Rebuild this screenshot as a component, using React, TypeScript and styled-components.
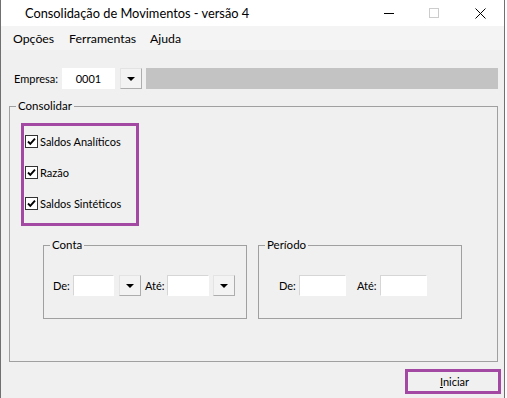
import React from "react";
import styled, { createGlobalStyle } from "styled-components";

const GlobalStyle = createGlobalStyle`
  html, body { margin: 0; padding: 0; background: #ffffff; }
  body { font-family: Lato, 'Noto Sans', 'Liberation Sans', sans-serif; font-size: 11px; color: #000; }
`;

const Window = styled.div`
  width: 505px; height: 398px;
  display: flex; flex-direction: column;
  border-left: 1px solid #707070;
  border-right: 1px solid #707070;
  box-sizing: border-box;
  background: #f0f0f0;
  overflow: hidden;
`;

const TitleBar = styled.div`
  height: 26px; flex: none;
  display: flex; align-items: center;
  background: #ffffff;
  padding-left: 24px;
`;

const Title = styled.div`
  flex: 1;
  font-size: 12.8px;
  line-height: 16px;
`;

const CaptionButton = styled.div<{ w?: number }>`
  width: ${p => p.w ?? 45}px; height: 26px;
  display: flex; align-items: center; justify-content: center;
`;

const MenuBar = styled.div`
  height: 24px; flex: none;
  display: flex; align-items: center;
  background: #f4f4f4;
  padding-left: 5px;
  padding-top: 1px;
  box-sizing: border-box;
  font-size: 12.3px;
`;

const MenuItem = styled.div<{ w: number }>`
  width: ${p => p.w}px;
  padding-left: 7px;
  line-height: 16px;
`;

const Body = styled.div`
  flex: 1;
  display: flex; flex-direction: column;
  padding: 18px 6px 0 8px;
`;

const Row = styled.div`
  display: flex; align-items: center;
`;

const EmpresaRow = styled(Row)`
  height: 21px;
  margin-left: 5px;
`;

const Label = styled.div<{ w?: number }>`
  ${p => p.w ? `width: ${p.w}px;` : ""}
  flex: none;
  line-height: 16px;
  white-space: nowrap;
`;

const TextBox = styled.div<{ w: number; center?: boolean }>`
  width: ${p => p.w}px; height: 21px;
  box-sizing: border-box;
  background: #ffffff;
  border: 1px solid ${p => p.center ? "#ffffff" : "#d6d6d6"};
  border-right-color: #ffffff; border-bottom-color: #ffffff;
  display: flex; align-items: center; justify-content: center;
  flex: none;
`;

const DropButton = styled.div<{ ml?: number }>`
  width: 22px; height: 21px;
  box-sizing: border-box;
  margin-left: ${p => p.ml ?? 5}px;
  background: #f3f3f3;
  border: 1px solid #adadad;
  border-top-color: #e3e3e3; border-left-color: #e3e3e3;
  display: flex; align-items: center; justify-content: center;
  flex: none;
`;

const Arrow = styled.div`
  width: 0; height: 0;
  border-left: 4px solid transparent;
  border-right: 4px solid transparent;
  border-top: 4px solid #000;
  margin-top: 1px;
`;

const GrayBar = styled.div`
  flex: 1; height: 21px;
  margin-left: 4px;
  background: #c3c3c3;
`;

const GroupBox = styled.div<{ w?: number; h: number }>`
  position: relative;
  ${p => p.w ? `width: ${p.w}px;` : ""}
  height: ${p => p.h}px;
  box-sizing: border-box;
  border: 1px solid #a0a0a0;
  flex: none;
`;

const GroupCaption = styled.span`
  position: absolute;
  top: -9px; left: 6px;
  padding: 0 2px;
  background: #f0f0f0;
  line-height: 16px;
  font-size: 11.5px;
`;

const Consolidar = styled(GroupBox)`
  margin-top: 17px;
  padding: 16px 0 0 11px;
`;

const Highlight = styled.div<{ w: number; h: number }>`
  width: ${p => p.w}px; height: ${p => p.h}px;
  box-sizing: border-box;
  border: 3px solid #a349a4;
`;

const CheckList = styled(Highlight)`
  display: flex; flex-direction: column;
  padding-left: 1px;
`;

const CheckRow = styled.div`
  height: 31px;
  display: flex; align-items: center;
`;

const CheckBox = styled.div`
  width: 13px; height: 13px;
  box-sizing: border-box;
  border: 1px solid #333333;
  background: #ffffff;
  display: flex; align-items: center; justify-content: center;
  margin-right: 2px;
`;

const SubGroups = styled.div`
  display: flex;
  gap: 11px;
  margin: 19px 0 0 22px;
`;

const FieldRow = styled(Row)<{ pl: number }>`
  margin-top: 29px;
  padding-left: ${p => p.pl}px;
  height: 21px;
`;

const Footer = styled.div`
  display: flex; justify-content: flex-end;
  margin: 7px -3px 0 0;
`;

const StartButton = styled(Highlight)`
  display: flex; align-items: center; justify-content: center;
  line-height: 16px;
  padding-left: 3px;
`;

const Check = () => (
  <svg width="9" height="9" viewBox="0 0 9 9">
    <path d="M1 4.5 L3.3 6.8 L8 1.6" stroke="#000" strokeWidth="1.9" fill="none" />
  </svg>
);

const CheckItem = ({ label }: { label: string }) => (
  <CheckRow>
    <CheckBox><Check /></CheckBox>
    <Label>{label}</Label>
  </CheckRow>
);

export default function App() {
  return (
    <>
      <GlobalStyle />
      <Window>
        <TitleBar>
          <Title>Consolidação de Movimentos - versão 4</Title>
          <CaptionButton>
            <svg width="11" height="11" viewBox="0 0 11 11"><path d="M0 5.5 H10" stroke="#000" strokeWidth="1" /></svg>
          </CaptionButton>
          <CaptionButton>
            <svg width="11" height="11" viewBox="0 0 11 11"><rect x="0.5" y="0.5" width="9" height="9" stroke="#cccccc" fill="none" /></svg>
          </CaptionButton>
          <CaptionButton w={47}>
            <svg width="11" height="11" viewBox="0 0 11 11"><path d="M0.5 0.5 L10.5 10.5 M10.5 0.5 L0.5 10.5" stroke="#000" strokeWidth="1" /></svg>
          </CaptionButton>
        </TitleBar>
        <MenuBar>
          <MenuItem w={49}>Opções</MenuItem>
          <MenuItem w={74}>Ferramentas</MenuItem>
          <MenuItem w={50}>Ajuda</MenuItem>
        </MenuBar>
        <Body>
          <EmpresaRow>
            <Label w={48}>Empresa:</Label>
            <TextBox w={53} center>0001</TextBox>
            <DropButton><Arrow /></DropButton>
            <GrayBar />
          </EmpresaRow>

          <Consolidar h={256}>
            <GroupCaption>Consolidar</GroupCaption>
            <CheckList w={118} h={103}>
              <CheckItem label="Saldos Analíticos" />
              <CheckItem label="Razão" />
              <CheckItem label="Saldos Sintéticos" />
            </CheckList>

            <SubGroups>
              <GroupBox w={204} h={74}>
                <GroupCaption>Conta</GroupCaption>
                <FieldRow pl={9}>
                  <Label w={20}>De:</Label>
                  <TextBox w={41} />
                  <DropButton><Arrow /></DropButton>
                  <Label w={22} style={{ marginLeft: 4 }}>Até:</Label>
                  <TextBox w={42} />
                  <DropButton ml={4}><Arrow /></DropButton>
                </FieldRow>
              </GroupBox>
              <GroupBox w={204} h={74}>
                <GroupCaption>Período</GroupCaption>
                <FieldRow pl={20}>
                  <Label w={20}>De:</Label>
                  <TextBox w={47} />
                  <Label w={23} style={{ marginLeft: 11 }}>Até:</Label>
                  <TextBox w={47} />
                </FieldRow>
              </GroupBox>
            </SubGroups>
          </Consolidar>

          <Footer>
            <StartButton w={96} h={25}><span><u>I</u>niciar</span></StartButton>
          </Footer>
        </Body>
      </Window>
    </>
  );
}
